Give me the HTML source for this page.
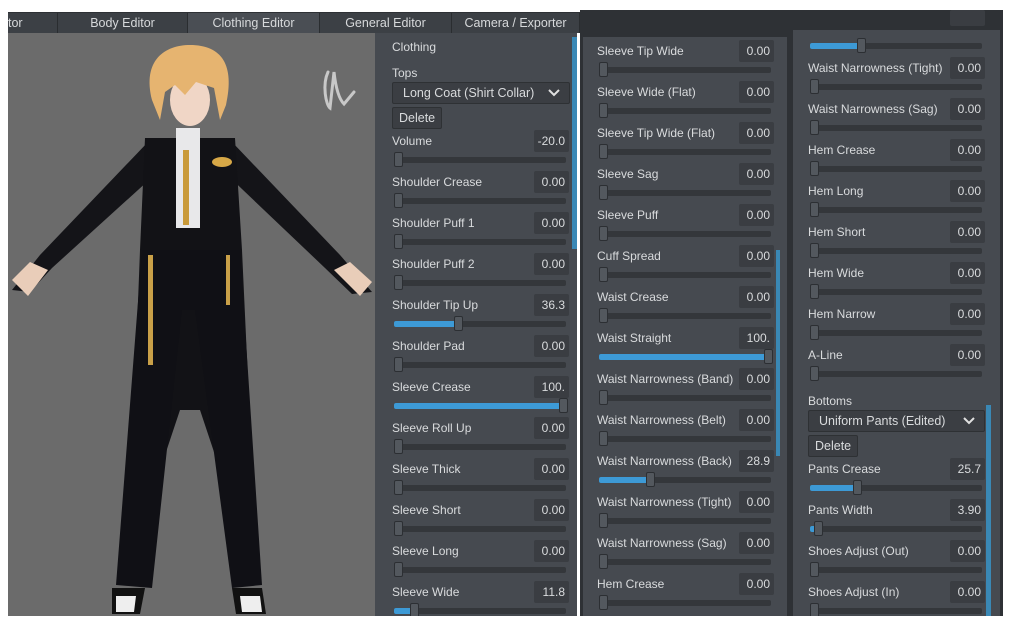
<!DOCTYPE html>
<html><head><meta charset="utf-8"><style>
*{margin:0;padding:0;box-sizing:border-box}
body{width:1024px;height:630px;background:#fff;position:relative;overflow:hidden;font-family:"Liberation Sans",sans-serif;font-size:12px;color:#d9dbdd}
.abs{position:absolute}
.tabbar{left:8px;top:12px;width:572px;height:21px;background:#2e3135}
.tab{position:absolute;top:1px;height:20px;background:#3c4045;border-right:1px solid #2a2d30;text-align:center;line-height:20px;color:#d7d9db;font-size:12.5px}
.tab.on{background:#4a4e54}
.hdr{left:580px;top:10px;width:423px;height:606px;background:#2e3135}
.view{left:8px;top:33px;width:367px;height:583px;background:#6b6b6b}
.pan{background:#464a50}
.sb{background:#3a88b5;width:5px}
.row{position:absolute;width:180px;height:41px}
.lb{position:absolute;left:0;top:0;line-height:22px;white-space:nowrap}
.in{position:absolute;left:142px;top:0;width:35px;height:22px;background:#3a3d42;border-radius:2px;text-align:right;padding-right:4px;line-height:22px}
.tr{position:absolute;left:2px;top:27px;width:172px;height:6px;background:#34373b;border-radius:2px}
.fl{position:absolute;left:0;top:0;height:6px;background:#3d9ad6;border-radius:2px}
.hd{position:absolute;top:-5px;width:9px;height:15px;background:#53585e;border:1px solid #2c2f33;border-radius:2px}
.dd{position:absolute;height:22px;background:#3b3e43;border:1px solid #2e3134;border-radius:2px;line-height:20px;padding-left:10px;font-size:12.5px}
.dd svg{position:absolute;right:9px;top:6px}
.btn{position:absolute;height:22px;background:#3b3e43;border:1px solid #2e3134;border-radius:2px;line-height:20px;padding:0 6px;font-size:12.5px}
.sec{position:absolute;line-height:16px}
</style></head><body>
<div class="abs tabbar">
<div class="tab" style="left:0;width:50px;text-align:left">tor</div>
<div class="tab" style="left:50px;width:130px">Body Editor</div>
<div class="tab on" style="left:180px;width:132px">Clothing Editor</div>
<div class="tab" style="left:312px;width:132px">General Editor</div>
<div class="tab" style="left:444px;width:128px">Camera / Exporter</div>
</div>
<div class="abs hdr"></div>
<div class="abs view"></div>
<svg class="abs" style="left:0;top:0" width="380" height="620" viewBox="0 0 380 620">
<path d="M328 72 C322 85 326 105 330 108 L334 72 C336 90 340 100 344 104 L354 92" stroke="#c8c8c8" stroke-width="3" fill="none" stroke-linecap="round"/>
<path d="M148 142 L40 255 L12 290 L30 292 L52 268 L160 170Z" fill="#141418"/>
<path d="M232 142 L340 255 L372 292 L352 294 L325 268 L222 170Z" fill="#141418"/>
<path d="M12 280 L30 262 L48 270 L28 296Z" fill="#e9cdb9"/>
<path d="M372 282 L350 262 L334 270 L360 296Z" fill="#e9cdb9"/>
<path d="M145 138 L235 138 L242 250 L248 380 L215 455 L200 410 L180 410 L165 455 L135 380 L140 250Z" fill="#121216"/>
<path d="M142 250 L240 250 L262 585 L232 588 L195 310 L182 310 L152 588 L116 585Z" fill="#101015"/>
<rect x="176" y="128" width="24" height="100" fill="#e8e8ea"/>
<rect x="183" y="150" width="6" height="75" fill="#c99a3a"/>
<ellipse cx="222" cy="162" rx="10" ry="5" fill="#d7a847"/>
<rect x="148" y="255" width="5" height="110" fill="#c9a048"/>
<rect x="226" y="255" width="4" height="50" fill="#c9a048"/>
<ellipse cx="190" cy="100" rx="20" ry="26" fill="#f0d6c6"/>
<path d="M152 100 C142 60 165 45 190 45 C222 45 235 65 226 105 L220 120 L214 88 L196 82 L185 95 L175 85 L165 92 L160 120Z" fill="#e6b470"/>
<path d="M112 588 L145 588 L140 614 L112 614Z" fill="#111"/>
<path d="M116 596 L136 596 L134 612 L116 612Z" fill="#eee"/>
<path d="M232 588 L262 588 L266 614 L236 614Z" fill="#111"/>
<path d="M240 596 L260 596 L262 612 L242 612Z" fill="#eee"/>
</svg>

<!-- panel 1 -->
<div class="abs pan" style="left:375px;top:33px;width:202px;height:583px"></div>
<div class="abs sb" style="left:572px;top:37px;height:212px"></div>
<div class="sec" style="left:392px;top:39px">Clothing</div>
<div class="sec" style="left:392px;top:65px">Tops</div>
<div class="dd" style="left:392px;top:82px;width:178px">Long Coat (Shirt Collar)<svg width="12" height="8" viewBox="0 0 12 8"><path d="M1 1L6 6L11 1" stroke="#e0e0e0" stroke-width="2" fill="none"/></svg></div>
<div class="btn" style="left:392px;top:107px">Delete</div>
<div style="position:absolute;left:392px;top:0">
<div class="row" style="top:130px"><div class="lb">Volume</div><div class="in">-20.0</div><div class="tr"><div class="hd" style="left:0"></div></div></div>
<div class="row" style="top:171px"><div class="lb">Shoulder Crease</div><div class="in">0.00</div><div class="tr"><div class="hd" style="left:0"></div></div></div>
<div class="row" style="top:212px"><div class="lb">Shoulder Puff 1</div><div class="in">0.00</div><div class="tr"><div class="hd" style="left:0"></div></div></div>
<div class="row" style="top:253px"><div class="lb">Shoulder Puff 2</div><div class="in">0.00</div><div class="tr"><div class="hd" style="left:0"></div></div></div>
<div class="row" style="top:294px"><div class="lb">Shoulder Tip Up</div><div class="in">36.3</div><div class="tr"><div class="fl" style="width:62px"></div><div class="hd" style="left:60px"></div></div></div>
<div class="row" style="top:335px"><div class="lb">Shoulder Pad</div><div class="in">0.00</div><div class="tr"><div class="hd" style="left:0"></div></div></div>
<div class="row" style="top:376px"><div class="lb">Sleeve Crease</div><div class="in">100.</div><div class="tr"><div class="fl" style="width:170px"></div><div class="hd" style="left:165px"></div></div></div>
<div class="row" style="top:417px"><div class="lb">Sleeve Roll Up</div><div class="in">0.00</div><div class="tr"><div class="hd" style="left:0"></div></div></div>
<div class="row" style="top:458px"><div class="lb">Sleeve Thick</div><div class="in">0.00</div><div class="tr"><div class="hd" style="left:0"></div></div></div>
<div class="row" style="top:499px"><div class="lb">Sleeve Short</div><div class="in">0.00</div><div class="tr"><div class="hd" style="left:0"></div></div></div>
<div class="row" style="top:540px"><div class="lb">Sleeve Long</div><div class="in">0.00</div><div class="tr"><div class="hd" style="left:0"></div></div></div>
<div class="row" style="top:581px"><div class="lb">Sleeve Wide</div><div class="in">11.8</div><div class="tr"><div class="fl" style="width:18px"></div><div class="hd" style="left:16px"></div></div></div>
</div>

<!-- panel 2 -->
<div class="abs pan" style="left:583px;top:37px;width:204px;height:579px"></div>
<div class="abs sb" style="left:776px;top:250px;height:206px;width:4px"></div>
<div style="position:absolute;left:597px;top:0">
<div class="row" style="top:40px"><div class="lb">Sleeve Tip Wide</div><div class="in">0.00</div><div class="tr"><div class="hd" style="left:0"></div></div></div>
<div class="row" style="top:81px"><div class="lb">Sleeve Wide (Flat)</div><div class="in">0.00</div><div class="tr"><div class="hd" style="left:0"></div></div></div>
<div class="row" style="top:122px"><div class="lb">Sleeve Tip Wide (Flat)</div><div class="in">0.00</div><div class="tr"><div class="hd" style="left:0"></div></div></div>
<div class="row" style="top:163px"><div class="lb">Sleeve Sag</div><div class="in">0.00</div><div class="tr"><div class="hd" style="left:0"></div></div></div>
<div class="row" style="top:204px"><div class="lb">Sleeve Puff</div><div class="in">0.00</div><div class="tr"><div class="hd" style="left:0"></div></div></div>
<div class="row" style="top:245px"><div class="lb">Cuff Spread</div><div class="in">0.00</div><div class="tr"><div class="hd" style="left:0"></div></div></div>
<div class="row" style="top:286px"><div class="lb">Waist Crease</div><div class="in">0.00</div><div class="tr"><div class="hd" style="left:0"></div></div></div>
<div class="row" style="top:327px"><div class="lb">Waist Straight</div><div class="in">100.</div><div class="tr"><div class="fl" style="width:170px"></div><div class="hd" style="left:165px"></div></div></div>
<div class="row" style="top:368px"><div class="lb">Waist Narrowness (Band)</div><div class="in">0.00</div><div class="tr"><div class="hd" style="left:0"></div></div></div>
<div class="row" style="top:409px"><div class="lb">Waist Narrowness (Belt)</div><div class="in">0.00</div><div class="tr"><div class="hd" style="left:0"></div></div></div>
<div class="row" style="top:450px"><div class="lb">Waist Narrowness (Back)</div><div class="in">28.9</div><div class="tr"><div class="fl" style="width:50px"></div><div class="hd" style="left:47px"></div></div></div>
<div class="row" style="top:491px"><div class="lb">Waist Narrowness (Tight)</div><div class="in">0.00</div><div class="tr"><div class="hd" style="left:0"></div></div></div>
<div class="row" style="top:532px"><div class="lb">Waist Narrowness (Sag)</div><div class="in">0.00</div><div class="tr"><div class="hd" style="left:0"></div></div></div>
<div class="row" style="top:573px"><div class="lb">Hem Crease</div><div class="in">0.00</div><div class="tr"><div class="hd" style="left:0"></div></div></div>
</div>

<!-- panel 3 -->
<div class="abs pan" style="left:793px;top:30px;width:207px;height:586px"></div>
<div class="abs sb" style="left:986px;top:405px;height:211px;width:5px"></div>
<div style="position:absolute;left:808px;top:0">
<div class="row" style="top:16px"><div class="in" style="top:-6px;height:16px"></div><div class="tr" style="top:27px"><div class="fl" style="width:50px"></div><div class="hd" style="left:47px"></div></div></div>
<div class="row" style="top:57px"><div class="lb">Waist Narrowness (Tight)</div><div class="in">0.00</div><div class="tr"><div class="hd" style="left:0"></div></div></div>
<div class="row" style="top:98px"><div class="lb">Waist Narrowness (Sag)</div><div class="in">0.00</div><div class="tr"><div class="hd" style="left:0"></div></div></div>
<div class="row" style="top:139px"><div class="lb">Hem Crease</div><div class="in">0.00</div><div class="tr"><div class="hd" style="left:0"></div></div></div>
<div class="row" style="top:180px"><div class="lb">Hem Long</div><div class="in">0.00</div><div class="tr"><div class="hd" style="left:0"></div></div></div>
<div class="row" style="top:221px"><div class="lb">Hem Short</div><div class="in">0.00</div><div class="tr"><div class="hd" style="left:0"></div></div></div>
<div class="row" style="top:262px"><div class="lb">Hem Wide</div><div class="in">0.00</div><div class="tr"><div class="hd" style="left:0"></div></div></div>
<div class="row" style="top:303px"><div class="lb">Hem Narrow</div><div class="in">0.00</div><div class="tr"><div class="hd" style="left:0"></div></div></div>
<div class="row" style="top:344px"><div class="lb">A-Line</div><div class="in">0.00</div><div class="tr"><div class="hd" style="left:0"></div></div></div>
<div class="sec" style="left:0;top:393px">Bottoms</div>
<div class="dd" style="left:0;top:410px;width:177px">Uniform Pants (Edited)<svg width="12" height="8" viewBox="0 0 12 8"><path d="M1 1L6 6L11 1" stroke="#e0e0e0" stroke-width="2" fill="none"/></svg></div>
<div class="btn" style="left:0;top:435px">Delete</div>
<div class="row" style="top:458px"><div class="lb">Pants Crease</div><div class="in">25.7</div><div class="tr"><div class="fl" style="width:46px"></div><div class="hd" style="left:43px"></div></div></div>
<div class="row" style="top:499px"><div class="lb">Pants Width</div><div class="in">3.90</div><div class="tr"><div class="fl" style="width:6px"></div><div class="hd" style="left:4px"></div></div></div>
<div class="row" style="top:540px"><div class="lb">Shoes Adjust (Out)</div><div class="in">0.00</div><div class="tr"><div class="hd" style="left:0"></div></div></div>
<div class="row" style="top:581px"><div class="lb">Shoes Adjust (In)</div><div class="in">0.00</div><div class="tr"><div class="hd" style="left:0"></div></div></div>
</div>
<div class="abs" style="left:0;top:616px;width:1024px;height:14px;background:#fff"></div>
</body></html>
